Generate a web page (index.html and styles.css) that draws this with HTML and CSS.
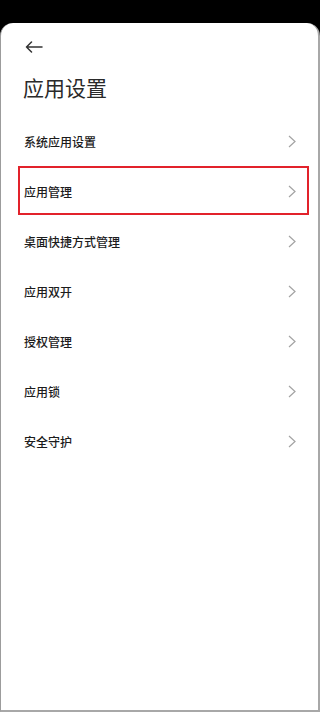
FILE: index.html
```html
<!DOCTYPE html>
<html lang="zh-CN">
<head>
<meta charset="utf-8">
<meta name="viewport" content="width=device-width, initial-scale=1">
<title>应用设置</title>
<link rel="stylesheet" href="styles.css">
</head>
<body>
<div class="screen">
  <div class="card">
    <div class="topbar">
      <svg class="back" width="18" height="12" viewBox="0 0 18 12" aria-hidden="true">
        <path d="M17 6H1.5M6.5 1L1.5 6l5 5" fill="none" stroke="#333" stroke-width="1.5" stroke-linecap="round" stroke-linejoin="round"/>
      </svg>
    </div>
    <h1 class="title">应用设置</h1>
    <ul class="list">
      <li class="row"><span class="label">系统应用设置</span><svg class="chev" width="8" height="13" viewBox="0 0 8 13"><path d="M1 1l6 5.5L1 12" fill="none" stroke="#a3a3a3" stroke-width="1.2"/></svg></li>
      <li class="row highlighted"><span class="label">应用管理</span><svg class="chev" width="8" height="13" viewBox="0 0 8 13"><path d="M1 1l6 5.5L1 12" fill="none" stroke="#a3a3a3" stroke-width="1.2"/></svg></li>
      <li class="row"><span class="label">桌面快捷方式管理</span><svg class="chev" width="8" height="13" viewBox="0 0 8 13"><path d="M1 1l6 5.5L1 12" fill="none" stroke="#a3a3a3" stroke-width="1.2"/></svg></li>
      <li class="row"><span class="label">应用双开</span><svg class="chev" width="8" height="13" viewBox="0 0 8 13"><path d="M1 1l6 5.5L1 12" fill="none" stroke="#a3a3a3" stroke-width="1.2"/></svg></li>
      <li class="row"><span class="label">授权管理</span><svg class="chev" width="8" height="13" viewBox="0 0 8 13"><path d="M1 1l6 5.5L1 12" fill="none" stroke="#a3a3a3" stroke-width="1.2"/></svg></li>
      <li class="row"><span class="label">应用锁</span><svg class="chev" width="8" height="13" viewBox="0 0 8 13"><path d="M1 1l6 5.5L1 12" fill="none" stroke="#a3a3a3" stroke-width="1.2"/></svg></li>
      <li class="row"><span class="label">安全守护</span><svg class="chev" width="8" height="13" viewBox="0 0 8 13"><path d="M1 1l6 5.5L1 12" fill="none" stroke="#a3a3a3" stroke-width="1.2"/></svg></li>
    </ul>
  </div>
</div>
</body>
</html>
```
FILE: styles.css
```css
* { box-sizing: border-box; }
html, body {
  margin: 0;
  padding: 0;
  background: #000;
  font-family: "Noto Sans CJK SC", "Noto Sans", sans-serif;
}
.screen {
  width: 320px;
  height: 712px;
  padding-top: 23px;
  display: flex;
  flex-direction: column;
}
.card {
  flex: 1;
  background: #fff;
  border-radius: 13px 13px 0 0;
  border-left: 1px solid #9c9c9c;
  border-right: 2px solid #a8a8a8;
  border-bottom: 2px solid #a8a8a8;
  display: flex;
  flex-direction: column;
}
.topbar {
  height: 47px;
  display: flex;
  align-items: center;
  padding-left: 24px;
}
.back { display: block; }
.title {
  margin: 0;
  height: 35px;
  line-height: 35px;
  padding-left: 22px;
  font-size: 21px;
  font-weight: 400;
  color: #2a2a2a;
}
.list {
  list-style: none;
  margin: 11px 0 0;
  padding: 0;
}
.row {
  position: relative;
  height: 50px;
  display: flex;
  align-items: center;
  justify-content: space-between;
  padding: 0 22px 0 23px;
}
.label {
  font-size: 12px;
  font-weight: 500;
  color: #1c1c1c;
}
.chev { display: block; }
.highlighted::after {
  content: "";
  position: absolute;
  left: 17px;
  top: 0;
  width: 287px;
  height: 45px;
  border: 2px solid #e2222b;
}
```
